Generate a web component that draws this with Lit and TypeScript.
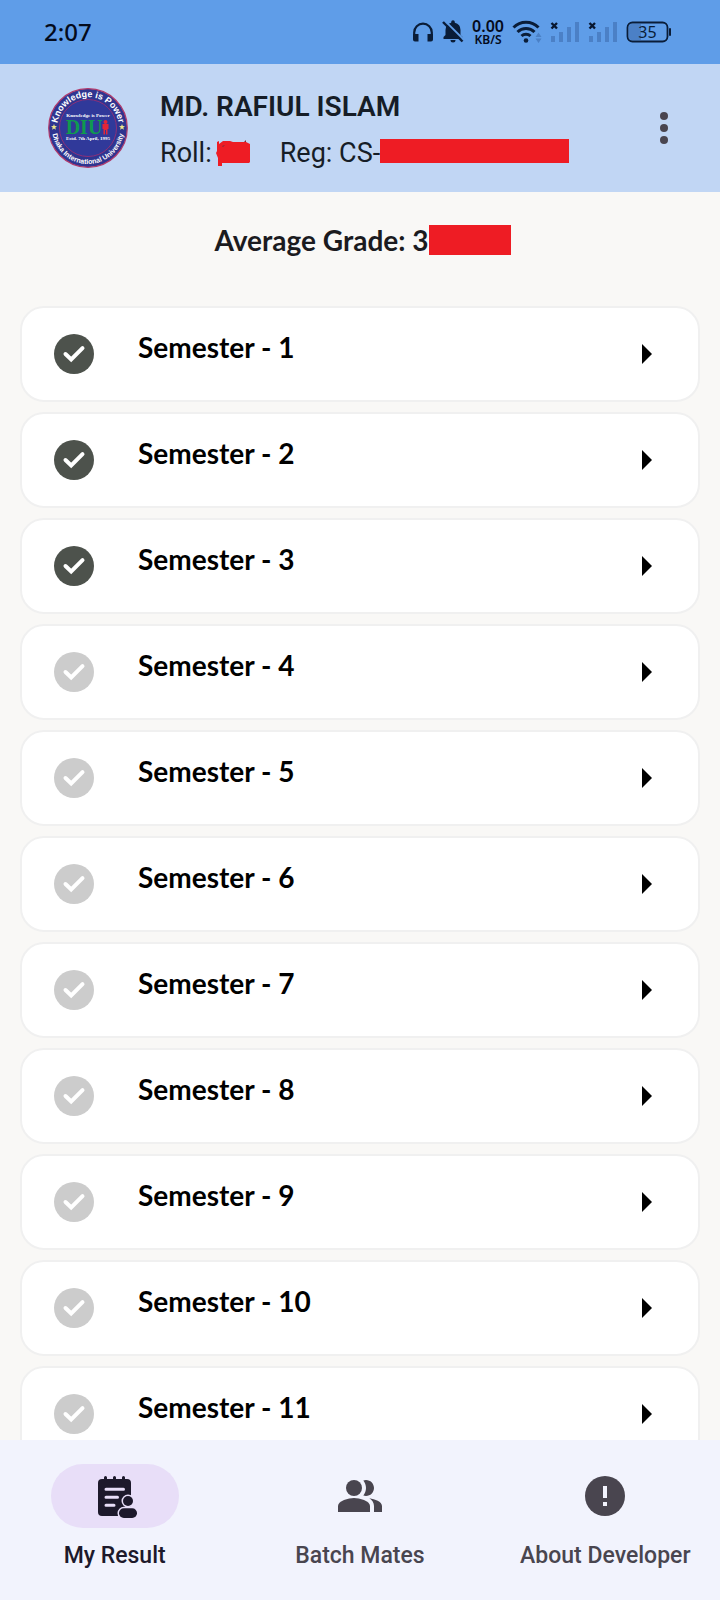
import { LitElement, html, css, svg } from "lit";
import { customElement, property, state } from "lit/decorators.js";
import { classMap } from "lit/directives/class-map.js";

@customElement("status-bar")
class StatusBar extends LitElement {
  static styles = css`
    :host {
      display: flex;
      align-items: center;
      justify-content: space-between;
      height: 64px;
      padding: 0 49px 0 44px;
      box-sizing: border-box;
      background: #5f9de8;
      color: #071730;
      font-family: "Noto Sans", sans-serif;
    }
    .time {
      font-size: 24px;
      line-height: 32px;
      font-weight: 500;
      color: #040b1c;
    }
    .icons {
      display: flex;
      align-items: center;
      gap: 8px;
    }
    svg {
      display: block;
      flex: none;
    }
    .speed {
      display: flex;
      flex-direction: column;
      align-items: center;
      width: 32px;
      padding-top: 2px;
      font-family: "Noto Sans", sans-serif;
      font-weight: 600;
      font-size: 16px;
      line-height: 13px;
      color: #040b1c;
    }
    .unit {
      font-size: 12px;
    }
    .battery {
      font-family: "Noto Sans", sans-serif;
      font-size: 16px;
    }
  `;

  private signal() {
    return html`<svg width="30" height="24" viewBox="0 0 30 24" aria-hidden="true">
      <path d="M1.500 3l5.500 5.500M7 3L1.500 8.500" stroke="#071730" stroke-width="2.400" />
      <path d="M1 16h4v6H1zM9 12h4v10H9zM17 7h4v15h-4zM25 2h4v20h-4z" fill="#4b80c6" />
    </svg>`;
  }

  render() {
    return html`
      <span class="time">2:07</span>
      <div class="icons">
        <svg width="22" height="24" viewBox="0 0 22 24" aria-hidden="true">
          <path d="M2.200 17v-4.500a8.800 8.800 0 0 1 17.600 0V17" fill="none" stroke="#0a1d38" stroke-width="2.200" />
          <path d="M1 14h5.500v7.500H3a2 2 0 0 1-2-2zM21 14h-5.500v7.500H19a2 2 0 0 0 2-2z" fill="#0a1d38" />
        </svg>
        <svg width="22" height="24" viewBox="0 0 22 24" aria-hidden="true">
          <path d="M1.500 19v-2l2-2V10a7.500 7.500 0 0 1 5.700-7.300V2a1.800 1.800 0 0 1 3.600 0v.7A7.500 7.500 0 0 1 18.500 10v5l2 2v2zM8.500 20h5a2.500 2.500 0 0 1-5 0z" fill="#0a1d38" />
          <path d="M3 1l19 19" stroke="#5f9de8" stroke-width="2" />
          <path d="M1 2l19.500 19.500" stroke="#0a1d38" stroke-width="2.400" />
        </svg>
        <div class="speed"><span>0.00</span><span class="unit">KB/S</span></div>
        <svg width="30" height="24" viewBox="0 0 30 24" aria-hidden="true">
          <g fill="none" stroke="#0a1d38" stroke-width="3">
            <path d="M1.500 7.500a17.500 17.500 0 0 1 25 0" />
            <path d="M5.500 12a12 12 0 0 1 17 0" />
            <path d="M9.500 16a6.500 6.500 0 0 1 9 0" />
          </g>
          <circle cx="14" cy="20.500" r="2.300" fill="#0a1d38" />
          <path d="M23.500 17l3-4.500 3 4.500zM23.500 18.500l3 4.500 3-4.500z" fill="#4b80c6" />
        </svg>
        ${this.signal()} ${this.signal()}
        <svg class="battery" width="45" height="24" viewBox="0 0 45 24" role="img" aria-label="Battery 35%">
          <path d="M5 4h10v16H5a2 2 0 0 1-2-2V6a2 2 0 0 1 2-2z" fill="#4b80c6" />
          <rect x="1.500" y="2.500" width="40" height="19" rx="5" fill="none" stroke="#0a1d38" stroke-width="1.800" />
          <path d="M44 9v6" stroke="#0a1d38" stroke-width="2" stroke-linecap="round" />
          <text x="21.500" y="18" text-anchor="middle" fill="#0a1d38">35</text>
        </svg>
      </div>
    `;
  }
}

@customElement("university-seal")
class UniversitySeal extends LitElement {
  static styles = css`
    :host {
      display: block;
      width: 80px;
      height: 80px;
    }
    svg {
      display: block;
    }
    .ring {
      font: 700 9px "Liberation Sans", sans-serif;
      fill: #fff;
    }
    .ring-small {
      font: 700 7px "Liberation Sans", sans-serif;
      fill: #fff;
    }
    .tiny {
      font: 700 5px "Liberation Serif", serif;
      fill: #fff;
    }
    .mark {
      font: 700 20px "Liberation Serif", serif;
      fill: #0f9a50;
    }
  `;

  render() {
    return html`<svg width="80" height="80" viewBox="0 0 80 80" role="img" aria-label="Dhaka International University">
      <defs>
        <path id="top" d="M9 40a31 31 0 0 1 62 0" />
        <path id="bottom" d="M4 40a36 36 0 0 0 72 0" />
        <path id="star" d="M0-3l.8 2.100 2.200.1-1.700 1.400.6 2.200L0 1.600l-1.900 1.200.6-2.200L-3-.8l2.200-.1z" fill="#ece58a" />
      </defs>
      <circle cx="40" cy="40" r="39.300" fill="#2f3590" stroke="#b13a6b" stroke-width="1.200" />
      <circle cx="40" cy="40" r="28.500" fill="#30399a" stroke="#8c3079" stroke-width="1" />
      <text class="ring" text-anchor="middle"><textPath href="#top" startOffset="50%">Knowledge is Power</textPath></text>
      <text class="ring-small" text-anchor="middle"><textPath href="#bottom" startOffset="50%">Dhaka International University</textPath></text>
      <use href="#star" x="6" y="39" />
      <use href="#star" x="74" y="39" />
      <text class="tiny" x="40" y="29" text-anchor="middle">Knowledge is Power</text>
      <text class="mark" x="36" y="46" text-anchor="middle">DIU</text>
      <g fill="#e32638">
        <circle cx="57.500" cy="34" r="2" />
        <path d="M54.500 36h6v5h-1v5.500h-1.500V42h-1v4.500h-1.500V41h-1z" />
      </g>
      <text class="tiny" x="40" y="52" text-anchor="middle">Estd. 7th April, 1995</text>
    </svg>`;
  }
}

@customElement("semester-card")
class SemesterCard extends LitElement {
  @property({ type: Number }) number = 1;
  @property({ type: Boolean }) done = false;

  static styles = css`
    :host {
      display: block;
    }
    .card {
      display: flex;
      align-items: center;
      width: 100%;
      height: 96px;
      padding: 0 46px 0 32px;
      box-sizing: border-box;
      border: 2px solid #f0f0f0;
      border-radius: 24px;
      background: #fff;
      color: #000;
      font-family: Lato, sans-serif;
      text-align: left;
      cursor: pointer;
    }
    .badge {
      flex: none;
      color: #ccc;
    }
    .badge.done {
      color: #4d524c;
    }
    .label {
      flex: 1;
      padding: 0 0 14px 44px;
      font-size: 28px;
      line-height: 36px;
      font-weight: 700;
    }
    .arrow {
      flex: none;
    }
  `;

  render() {
    return html`<button class="card" type="button">
      <svg class=${classMap({ badge: true, done: this.done })} width="40" height="40" viewBox="0 0 40 40" aria-hidden="true">
        <circle cx="20" cy="20" r="20" fill="currentColor" />
        <path d="M11.500 20l5.700 5.500 11.300-11.300" fill="none" stroke="#fff" stroke-width="4" stroke-linecap="round" stroke-linejoin="miter" />
      </svg>
      <span class="label">Semester - ${this.number}</span>
      <svg class="arrow" width="10" height="20" viewBox="0 0 10 20" aria-hidden="true"><path d="M0 0l10 10L0 20z" /></svg>
    </button>`;
  }
}

const resultIcon = svg`
  <g fill="currentColor">
    <rect x="7" y="7" width="33" height="37" rx="4" />
    <path d="M13 10V5.500a1.500 1.500 0 0 1 3 0V10zM22 10V5.500a1.500 1.500 0 0 1 3 0V10zM31 10V5.500a1.500 1.500 0 0 1 3 0V10z" />
  </g>
  <path d="M15 17.300h17.500M15 25.300h11.500M15 33.300h8" stroke="#e8def8" stroke-width="3" stroke-linecap="round" />
  <g fill="currentColor" stroke="#e8def8" stroke-width="3" paint-order="stroke">
    <rect x="28" y="36.300" width="18" height="9.700" rx="4.800" />
    <circle cx="37" cy="29" r="5" />
  </g>`;

const peopleIcon = svg`
  <g fill="currentColor" transform="scale(2)">
    <path d="M16.670 13.130C18.040 14.060 19 15.320 19 17v3h4v-3c0-2.180-3.570-3.470-6.330-3.870z" />
    <path d="M15 12c2.210 0 4-1.790 4-4s-1.790-4-4-4c-.47 0-.91.1-1.330.24C14.500 5.270 15 6.580 15 8s-.5 2.730-1.330 3.760c.42.14.86.24 1.330.24z" />
    <circle cx="9" cy="8" r="4" />
    <path d="M9 13c-2.670 0-8 1.340-8 4v3h16v-3c0-2.660-5.330-4-8-4z" />
  </g>`;

const infoIcon = svg`
  <circle cx="24" cy="24" r="20" fill="currentColor" />
  <path d="M22 14h4v12h-4zM22 30h4v4h-4z" fill="#f2f3fd" />`;

const tabs = [
  { id: "result", label: "My Result", icon: resultIcon },
  { id: "mates", label: "Batch Mates", icon: peopleIcon },
  { id: "developer", label: "About Developer", icon: infoIcon },
];

@customElement("app-root")
class AppRoot extends LitElement {
  @state() private active = "result";

  static styles = css`
    :host {
      display: flex;
      flex-direction: column;
      height: 100vh;
      background: #f9f8f6;
      color: #1b1b1f;
      font-family: Roboto, sans-serif;
    }
    .header {
      display: flex;
      align-items: center;
      gap: 32px;
      height: 128px;
      padding: 0 32px 0 48px;
      box-sizing: border-box;
      background: #c1d6f4;
      flex: none;
    }
    .profile {
      flex: 1;
      padding-top: 4px;
    }
    .name {
      margin: 0 0 8px;
      font-size: 28px;
      line-height: 38px;
      font-weight: 600;
      color: #161d27;
    }
    .ids {
      display: flex;
      gap: 30px;
      font-size: 27px;
      line-height: 38px;
      color: #161d27;
    }
    .field {
      display: flex;
      align-items: center;
    }
    .mask {
      background: #ee1c24;
    }
    .mask-roll {
      flex: none;
      width: 34px;
      height: 27px;
      margin-left: 4px;
    }
    .mask-reg {
      width: 189px;
      height: 24px;
      margin-bottom: 4px;
    }
    .mask-grade {
      width: 82px;
      height: 30px;
    }
    .menu {
      display: grid;
      place-items: center;
      width: 48px;
      height: 48px;
      padding: 0;
      border: 0;
      background: none;
      color: #49454f;
    }
    .average {
      display: flex;
      align-items: center;
      justify-content: center;
      height: 96px;
      margin: 0;
      padding-left: 5px;
      flex: none;
      font-family: Lato, sans-serif;
      font-size: 28px;
      line-height: 36px;
      font-weight: 700;
    }
    .list {
      display: flex;
      flex-direction: column;
      gap: 10px;
      flex: 1;
      min-height: 0;
      margin: 0;
      padding: 18px 20px 0;
      overflow-y: auto;
      scrollbar-width: none;
      list-style: none;
    }
    .nav {
      display: grid;
      grid-template-columns: repeat(3, 1fr);
      gap: 16px;
      padding: 24px 0 20px;
      height: 160px;
      box-sizing: border-box;
      background: #f2f3fd;
      flex: none;
    }
    .tab {
      display: flex;
      flex-direction: column;
      align-items: center;
      gap: 12px;
      color: #49454f;
      font-size: 23px;
      line-height: 32px;
      font-weight: 500;
      white-space: nowrap;
      text-decoration: none;
    }
    .pill {
      display: grid;
      place-items: center;
      width: 128px;
      height: 64px;
      border-radius: 32px;
    }
    .active {
      color: #1d192b;
    }
    .active .pill {
      background: #e8def8;
    }
  `;

  render() {
    return html`
      <status-bar></status-bar>
      <header class="header">
        <university-seal></university-seal>
        <div class="profile">
          <h1 class="name">MD. RAFIUL ISLAM</h1>
          <div class="ids">
            <span class="field">Roll:<svg class="mask-roll" viewBox="2 0 34 27" aria-hidden="true">
              <path d="M3 2l2-1v3l4-3h7l3 1h13l2 1 2 1v18l-1 1H8v3H4v-8l-2-5 1-2z" fill="#ee1c24" />
              <path d="M8 6l3-1-2 2zM12 4l3 1zM30 2l2-2v2z" fill="#7a2a3a" />
            </svg></span>
            <span class="field">Reg: CS-<span class="mask mask-reg"></span></span>
          </div>
        </div>
        <button class="menu" type="button" aria-label="More options">
          <svg width="48" height="48" viewBox="0 0 48 48" fill="currentColor" aria-hidden="true">
            <circle cx="24" cy="12" r="4" /><circle cx="24" cy="24" r="4" /><circle cx="24" cy="36" r="4" />
          </svg>
        </button>
      </header>
      <p class="average">Average Grade: 3<span class="mask mask-grade"></span></p>
      <ul class="list">
        ${Array.from({ length: 11 }, (_, i) => html`<li><semester-card .number=${i + 1} ?done=${i < 3}></semester-card></li>`)}
      </ul>
      <nav class="nav">
        ${tabs.map(
          (t) => html`<a class=${classMap({ tab: true, active: this.active === t.id })} href="#${t.id}" @click=${() => (this.active = t.id)}>
            <span class="pill"><svg width="48" height="48" viewBox="0 0 48 48" aria-hidden="true">${t.icon}</svg></span>
            <span>${t.label}</span>
          </a>`,
        )}
      </nav>
    `;
  }
}
